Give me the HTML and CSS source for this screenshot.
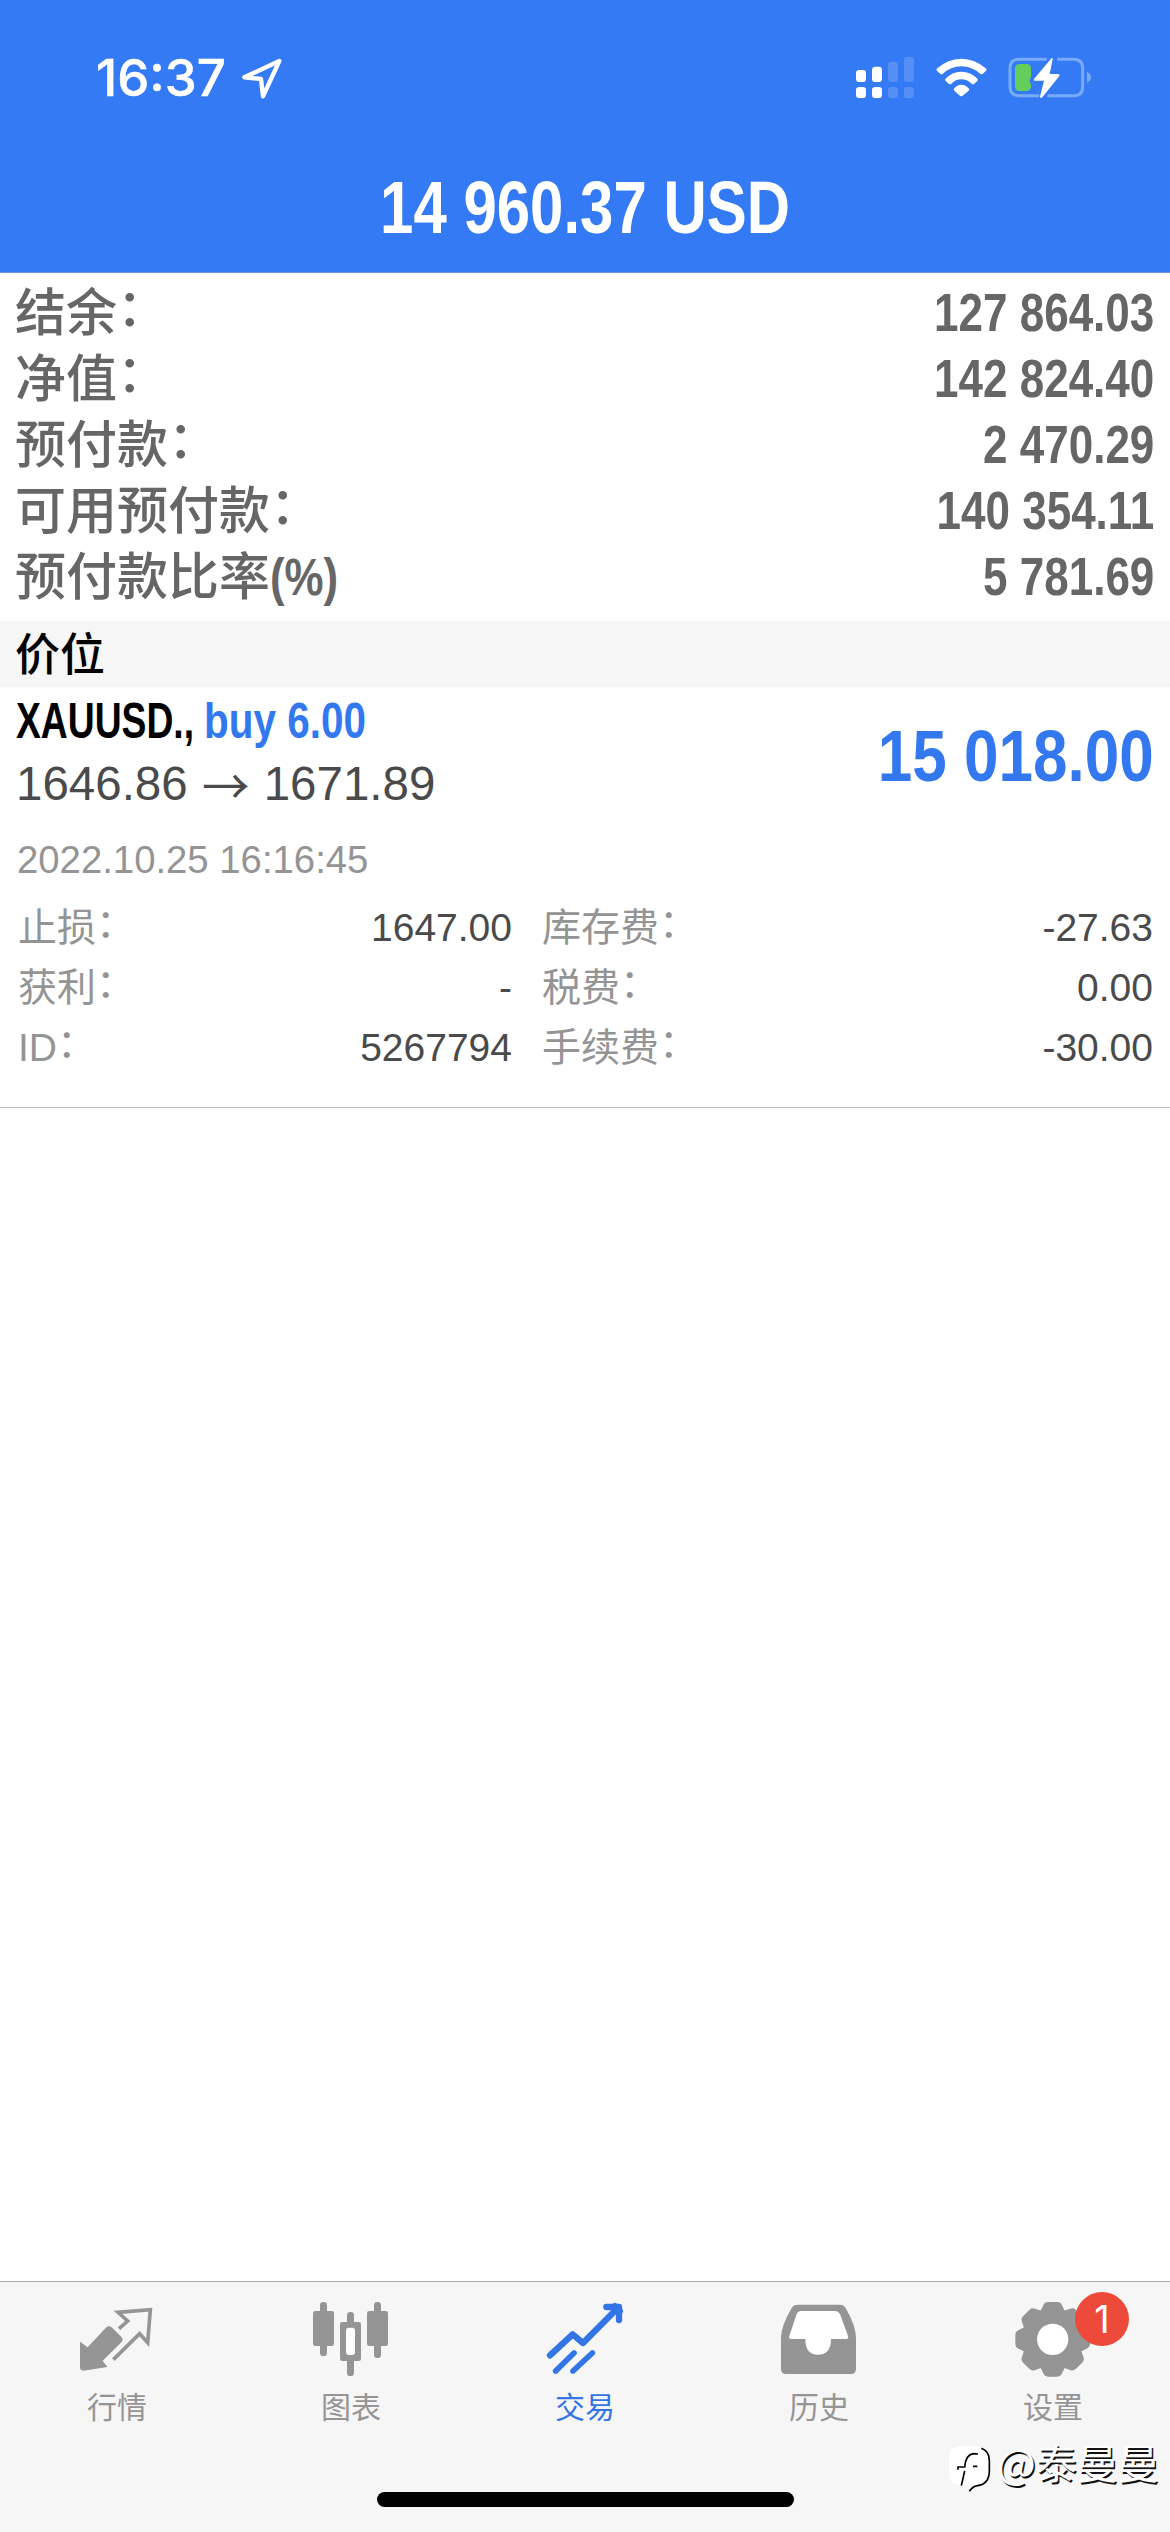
FILE: index.html
```html
<!DOCTYPE html>
<html lang="zh-CN">
<head>
<meta charset="utf-8">
<title>交易</title>
<link rel="stylesheet" href="styles.css">
</head>
<body>
<header class="header">
  <div class="status">
    <div class="status-left">
      <span class="time">16:37</span>
      <svg class="location" viewBox="540 80 126 129"><path d="M655 92 L550 141 L600 146 L606 198 Z" fill="none" stroke="#fff" stroke-width="13" stroke-linejoin="round"/></svg>
    </div>
    <svg class="status-icons" viewBox="75 75 720 135">
      <g fill="#fff">
        <rect x="78" y="120" width="30" height="36" rx="10"/><rect x="78" y="171" width="30" height="33" rx="10"/>
        <rect x="126" y="110" width="30" height="46" rx="10"/><rect x="126" y="171" width="30" height="33" rx="10"/>
        <g opacity=".16"><rect x="174" y="96" width="30" height="60" rx="10"/><rect x="174" y="171" width="30" height="33" rx="10"/>
        <rect x="222" y="81" width="30" height="75" rx="10"/><rect x="222" y="171" width="30" height="33" rx="10"/></g>
        <path d="M320 116 Q354 86 394 86 Q434 86 469 116 Q470 120 468 122 L458 132 Q454 134 451 132 Q426 109 394 109 Q362 109 338 132 Q334 134 331 132 L321 122 Q318 119 320 116Z"/>
        <path d="M346 147 Q366 125 394 125 Q422 125 443 147 Q444 151 442 153 L432 162 Q428 164 425 161 Q411 148 394 148 Q377 148 364 161 Q360 164 357 162 L347 153 Q344 150 346 147Z"/>
        <path d="M372 176 Q381 164 394 164 Q407 164 417 176 Q419 179 416 182 L398 197 Q394 200 390 197 L373 182 Q370 179 372 176Z"/>
      </g>
      <path d="M650 88 H567 Q540 88 540 115 V170 Q540 197 567 197 H628 M682 88 H731 Q758 88 758 115 V170 Q758 197 731 197 H652" fill="none" stroke="#79abf9" stroke-width="9"/>
      <path d="M771 126 Q783 131 783 142 Q783 153 771 158Z" fill="#79abf9"/>
      <path d="M570 102 H590 Q603 102 603 116 V140 L598 154 L603 162 V168 Q603 183 588 183 H570 Q555 183 555 168 V117 Q555 102 570 102Z" fill="#65cd5c"/>
      <path d="M665 84 L612 147 Q610 152 614 152 H642 L630 200 Q631 206 637 202 L688 138 Q690 133 686 132 H659 L668 88 Q668 83 665 84Z" fill="#fff"/>
    </svg>
  </div>
  <h1 class="total"><span class="cond">14 960.37 USD</span></h1>
</header>

<section class="summary">
  <div class="row"><span>结余<i class="colon">：</i></span><b class="cond">127 864.03</b></div>
  <div class="row"><span>净值<i class="colon">：</i></span><b class="cond">142 824.40</b></div>
  <div class="row"><span>预付款<i class="colon">：</i></span><b class="cond">2 470.29</b></div>
  <div class="row"><span>可用预付款<i class="colon">：</i></span><b class="cond">140 354.11</b></div>
  <div class="row"><span>预付款比率<i class="unit">(%)</i></span><b class="cond">5 781.69</b></div>
</section>

<h2 class="section-title">价位</h2>

<article class="position">
  <div class="position-head">
    <div>
      <div class="deal"><span class="symbol">XAUUSD.,</span><span class="side">buy 6.00</span></div>
      <div class="prices"><span>1646.86</span><span class="arrow">→</span><span>1671.89</span></div>
    </div>
    <div class="profit cond">15 018.00</div>
  </div>
  <div class="date">2022.10.25 16:16:45</div>
  <div class="details">
    <div class="detail"><span>止损<i class="colon">：</i></span><b>1647.00</b></div>
    <div class="detail"><span>库存费<i class="colon">：</i></span><b>-27.63</b></div>
    <div class="detail"><span>获利<i class="colon">：</i></span><b>-</b></div>
    <div class="detail"><span>税费<i class="colon">：</i></span><b>0.00</b></div>
    <div class="detail"><span>ID<i class="colon">：</i></span><b>5267794</b></div>
    <div class="detail"><span>手续费<i class="colon">：</i></span><b>-30.00</b></div>
  </div>
</article>

<nav class="tabs">
  <div class="tab">
    <svg viewBox="105 78 252 252"><path fill="currentColor" d="M120 215 L143 232 L199 172 Q207 165 215 172 L245 202 Q251 208 245 216 L188 272 L202 291 L130 302 Q120 302 120 292Z"/><path d="M237 176 L263 153 L234 127 L331 119 L323 218 L299 191 L220 269" fill="none" stroke="currentColor" stroke-width="11"/></svg>
    <span>行情</span>
  </div>
  <div class="tab">
    <svg viewBox="807 78 252 252"><g fill="currentColor"><rect x="840" y="96" width="21" height="162" rx="10"/><rect x="819" y="123" width="63" height="105" rx="7"/><rect x="1002" y="96" width="21" height="168" rx="10"/><rect x="981" y="123" width="63" height="105" rx="7"/><rect x="921" y="126" width="21" height="192" rx="10"/><rect x="900" y="156" width="63" height="117" rx="7"/></g><rect x="918" y="173" width="27" height="82" rx="9" fill="#fff"/></svg>
    <span>图表</span>
  </div>
  <div class="tab active">
    <svg viewBox="129 78 252 252"><g fill="none" stroke="currentColor" stroke-linecap="round" stroke-linejoin="round"><path d="M150 256 L218 193 L249 219 L345 122" stroke-width="19"/><path d="M319 111 H357 V150" stroke-width="19"/><path d="M345 108 L360 123" stroke-width="18"/><path d="M167 303 L222 249 M219 303 L277 249" stroke-width="17"/></g><path fill="currentColor" d="M326 111 H357 V142Z"/></svg>
    <span>交易</span>
  </div>
  <div class="tab">
    <svg viewBox="831 78 252 252"><path fill="currentColor" d="M893 104 H1020 Q1031 104 1037 114 Q1068 168 1068 205 V297 Q1068 312 1053 312 H858 Q843 312 843 297 V205 Q843 168 875 114 Q881 104 893 104Z"/><path fill="#fff" d="M903 123 H1006 Q1015 123 1020 132 L1044 198 Q1046 207 1038 207 H993 Q993 254 954 254 Q916 254 916 207 H874 Q865 207 868 198 L890 132 Q894 123 903 123Z"/></svg>
    <span>历史</span>
  </div>
  <div class="tab">
    <svg viewBox="273 78 252 252"><g fill="currentColor"><circle cx="398" cy="208" r="90"/><g id="teeth"><path id="tooth" d="M360 126 L370 106 Q374 96 384 96 H412 Q422 96 426 106 L436 126Z"/><use href="#tooth" transform="rotate(45 398 208)"/><use href="#tooth" transform="rotate(90 398 208)"/><use href="#tooth" transform="rotate(135 398 208)"/></g><use href="#teeth" transform="rotate(180 398 208)"/></g><circle cx="398" cy="208" r="47" fill="#fff"/></svg>
    <span>设置</span>
    <em class="badge">1</em>
  </div>
  <div class="home"></div>
  <div class="watermark">
    <svg viewBox="84 525 132 147"><path d="M120 531 H172 Q210 538 210 576 V605 Q208 648 171 650 L148 668 L154 648 H120 Q87 646 87 610 V563 Q87 533 120 531Z" fill="#fff"/><g fill="none" stroke="#000" stroke-width="5"><path d="M184 538 Q208 546 208 575 V605 Q208 645 172 650 Q158 652 148 667"/><path d="M124 650 L134 606 M114 602 V594 H134 Q137 557 160 554 L174 555 M159 592 H172"/></g></svg>
    <span>@泰曼曼</span>
  </div>
</nav>
</body>
</html>
```

FILE: styles.css
```css
* { box-sizing: border-box; margin: 0; padding: 0; }
body {
  width: 1170px; height: 2532px;
  display: flex; flex-direction: column;
  background: #fff; color: #4a4a4b;
  font-family: "Liberation Sans", "Noto Sans CJK SC", sans-serif;
  overflow: hidden;
}
b, i, em { font-style: normal; font-weight: inherit; }
.cond { display: block; white-space: nowrap; font-weight: 700; transform: scaleX(.83); transform-origin: right; }
.colon { display: inline-block; transform: translateY(-.09em); }

.header { height: 273px; background: #347af4; color: #fff; border-bottom: 1px solid #6b97e0; }
.status { height: 155px; padding: 55px 75px 0 96px; display: flex; justify-content: space-between; }
.status-left { display: flex; gap: 14px; }
.time { width: 131px; font: 500 51px/46px Inter, sans-serif; white-space: nowrap; letter-spacing: 0; -webkit-text-stroke: .5px #fff; }
.location { width: 42px; height: 43px; margin-top: 2px; }
.status-icons { width: 240px; height: 45px; }
.total { height: 105px; display: flex; justify-content: center; font-size: 74px; line-height: 105px; }
.total .cond { transform-origin: center; transform: scaleX(.81); }

.summary { height: 348px; padding: 7px 16px 0 15px; color: #666; }
.row { height: 66px; display: flex; justify-content: space-between; align-items: baseline; font-size: 51px; font-weight: 500; line-height: 66px; white-space: nowrap; }
.row .cond { font-size: 53px; }
.unit { display: inline-block; font-weight: 700; transform: scaleX(.86); transform-origin: left; }

.section-title { height: 66px; padding: 2px 15px 0; background: #f6f6f6; color: #000; font-size: 45px; font-weight: 500; line-height: 66px; }

.position { height: 421px; padding: 1px 16px 0; border-bottom: 1px solid #bbbbbd; }
.position-head { height: 127px; display: flex; justify-content: space-between; }
.deal { height: 66px; display: flex; font-size: 50px; font-weight: 700; line-height: 66px; white-space: nowrap; }
.symbol { width: 188px; color: #000; transform: scaleX(.745); transform-origin: left; }
.side { color: #3478f0; transform: scaleX(.81); transform-origin: left; }
.prices { height: 60px; display: flex; font-size: 47.5px; line-height: 60px; }
.arrow { width: 76px; text-align: center; font-family: "Noto Sans CJK SC", sans-serif; font-weight: 400; }
.profit { color: #3478f0; font-size: 73px; line-height: 135px; transform: scaleX(.85); }
.date { margin-top: 17px; height: 56px; color: #949494; font-size: 38.3px; line-height: 56px; padding-left: 1px; }
.details { margin-top: 10px; display: grid; grid-template-columns: 496px 613px; column-gap: 28px; }
.detail { height: 60px; display: flex; justify-content: space-between; font-size: 39px; line-height: 60px; padding-left: 2px; }
.detail span { color: #949494; }

.tabs { position: relative; margin-top: auto; height: 251px; display: grid; grid-template-columns: repeat(5, 234px); background: #f6f6f6; border-top: 1px solid #a9a9a9; color: #959595; }
.tab { position: relative; display: flex; flex-direction: column; align-items: center; padding-top: 14px; font-size: 30px; line-height: 40px; }
.tab svg { width: 84px; height: 84px; }
.tab span { margin-top: 8px; }
.active { color: #3475e6; }
.badge { position: absolute; left: 139px; top: 10px; width: 54px; height: 54px; border-radius: 50%; background: #ee4a3c; color: #fff; text-align: center; font: 400 38px/54px Inter, sans-serif; }
.home { position: absolute; left: 377px; top: 210px; width: 417px; height: 15px; border-radius: 8px; background: #000; }
.watermark { position: absolute; left: 948px; top: 162px; display: flex; color: #fff; font: 41px/44px "Noto Sans CJK SC", sans-serif; text-shadow: 1.5px 1.5px 0 #111; white-space: nowrap; }
.watermark svg { width: 44px; height: 49px; }
.watermark span { margin: -5px 0 0 5px; }
```
